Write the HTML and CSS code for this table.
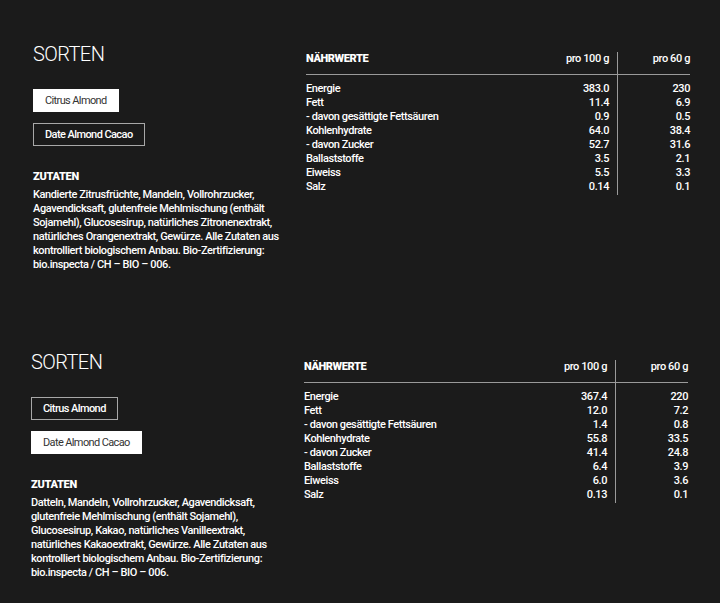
FILE: index.html
```html
<!DOCTYPE html>
<html lang="de">
<head>
<meta charset="utf-8">
<title>Sorten</title>
<link rel="stylesheet" href="styles.css">
</head>
<body>
<section class="product">
  <div class="info">
    <h2 class="title">SORTEN</h2>
    <div class="variants">
      <span class="variant variant--active">Citrus Almond</span>
      <span class="variant">Date Almond Cacao</span>
    </div>
    <h3 class="label">ZUTATEN</h3>
    <p class="ingredients">Kandierte Zitrusfrüchte, Mandeln, Vollrohrzucker, Agavendicksaft, glutenfreie Mehlmischung (enthält Sojamehl), Glucosesirup, natürliches Zitronenextrakt, natürliches Orangenextrakt, Gewürze. Alle Zutaten aus kontrolliert biologischem Anbau. Bio-Zertifizierung: bio.inspecta / CH – BIO – 006.</p>
  </div>
  <table class="nutrition">
    <thead>
      <tr><th class="name">NÄHRWERTE</th><th class="v1">pro 100 g</th><th class="v2">pro 60 g</th></tr>
    </thead>
    <tbody>
      <tr class="first"><td class="name">Energie</td><td class="v1">383.0</td><td class="v2">230</td></tr>
      <tr><td class="name">Fett</td><td class="v1">11.4</td><td class="v2">6.9</td></tr>
      <tr><td class="name">- davon gesättigte Fettsäuren</td><td class="v1">0.9</td><td class="v2">0.5</td></tr>
      <tr><td class="name">Kohlenhydrate</td><td class="v1">64.0</td><td class="v2">38.4</td></tr>
      <tr><td class="name">- davon Zucker</td><td class="v1">52.7</td><td class="v2">31.6</td></tr>
      <tr><td class="name">Ballaststoffe</td><td class="v1">3.5</td><td class="v2">2.1</td></tr>
      <tr><td class="name">Eiweiss</td><td class="v1">5.5</td><td class="v2">3.3</td></tr>
      <tr><td class="name">Salz</td><td class="v1">0.14</td><td class="v2">0.1</td></tr>
    </tbody>
  </table>
</section>
<section class="product product--shift">
  <div class="info">
    <h2 class="title">SORTEN</h2>
    <div class="variants">
      <span class="variant">Citrus Almond</span>
      <span class="variant variant--active">Date Almond Cacao</span>
    </div>
    <h3 class="label">ZUTATEN</h3>
    <p class="ingredients">Datteln, Mandeln, Vollrohrzucker, Agavendicksaft, glutenfreie Mehlmischung (enthält Sojamehl), Glucosesirup, Kakao, natürliches Vanilleextrakt, natürliches Kakaoextrakt, Gewürze. Alle Zutaten aus kontrolliert biologischem Anbau. Bio-Zertifizierung: bio.inspecta / CH – BIO – 006.</p>
  </div>
  <table class="nutrition">
    <thead>
      <tr><th class="name">NÄHRWERTE</th><th class="v1">pro 100 g</th><th class="v2">pro 60 g</th></tr>
    </thead>
    <tbody>
      <tr class="first"><td class="name">Energie</td><td class="v1">367.4</td><td class="v2">220</td></tr>
      <tr><td class="name">Fett</td><td class="v1">12.0</td><td class="v2">7.2</td></tr>
      <tr><td class="name">- davon gesättigte Fettsäuren</td><td class="v1">1.4</td><td class="v2">0.8</td></tr>
      <tr><td class="name">Kohlenhydrate</td><td class="v1">55.8</td><td class="v2">33.5</td></tr>
      <tr><td class="name">- davon Zucker</td><td class="v1">41.4</td><td class="v2">24.8</td></tr>
      <tr><td class="name">Ballaststoffe</td><td class="v1">6.4</td><td class="v2">3.9</td></tr>
      <tr><td class="name">Eiweiss</td><td class="v1">6.0</td><td class="v2">3.6</td></tr>
      <tr><td class="name">Salz</td><td class="v1">0.13</td><td class="v2">0.1</td></tr>
    </tbody>
  </table>
</section>
</body>
</html>
```
FILE: styles.css
```css
html, body {
  margin: 0;
  padding: 0;
  background: #1b1b1b;
  color: #ffffff;
  font-family: Roboto, "Liberation Sans", sans-serif;
}
.product {
  display: grid;
  grid-template-columns: 260px 1fr;
  column-gap: 13px;
  align-items: start;
  height: 308px;
  box-sizing: border-box;
  padding: 42px 30px 0 33px;
}
.product--shift {
  padding-left: 31px;
  padding-right: 32px;
}
.title {
  margin: 0;
  font-size: 20px;
  font-weight: 300;
  line-height: 24px;
  letter-spacing: -0.6px;
}
.variants {
  margin-top: 23px;
  display: flex;
  flex-direction: column;
  align-items: flex-start;
  gap: 11px;
}
.variant {
  display: block;
  box-sizing: border-box;
  height: 23px;
  line-height: 21px;
  padding: 0 11px;
  border: 1px solid #a8a8a8;
  font-size: 11px;
  font-weight: 500;
  letter-spacing: -0.58px;
  color: #ffffff;
}
.variant--active {
  background: #ffffff;
  border-color: #ffffff;
  color: #333333;
  font-weight: 400;
  letter-spacing: -0.62px;
}
.label {
  margin: 24px 0 0;
  font-size: 11px;
  font-weight: 900;
  line-height: 14px;
  letter-spacing: -0.3px;
}
.ingredients {
  margin: 4px 0 0;
  font-size: 11px;
  font-weight: 500;
  line-height: 14px;
  letter-spacing: -0.4px;
}
.nutrition {
  margin-top: 10px;
  width: 100%;
  border-collapse: collapse;
  font-size: 11px;
  font-weight: 500;
  letter-spacing: -0.4px;
}
.nutrition th {
  font-weight: 500;
  height: 14px;
  line-height: 14px;
  padding: 0 0 8px;
  vertical-align: top;
  border-bottom: 1px solid #9a9a9a;
}
.nutrition th.name {
  font-weight: 900;
  text-align: left;
}
.nutrition td {
  padding: 0;
  height: 14px;
  line-height: 14px;
}
.nutrition tr.first td {
  padding-top: 7px;
}
.nutrition .name {
  text-align: left;
}
.nutrition th.v1,
.nutrition td.v1 {
  width: 90px;
  text-align: right;
  padding-right: 8px;
  border-right: 1px solid #9a9a9a;
}
.nutrition th.v2,
.nutrition td.v2 {
  width: 72px;
  text-align: right;
}
.nutrition tbody tr:last-child td {
  padding-bottom: 1px;
}
```
